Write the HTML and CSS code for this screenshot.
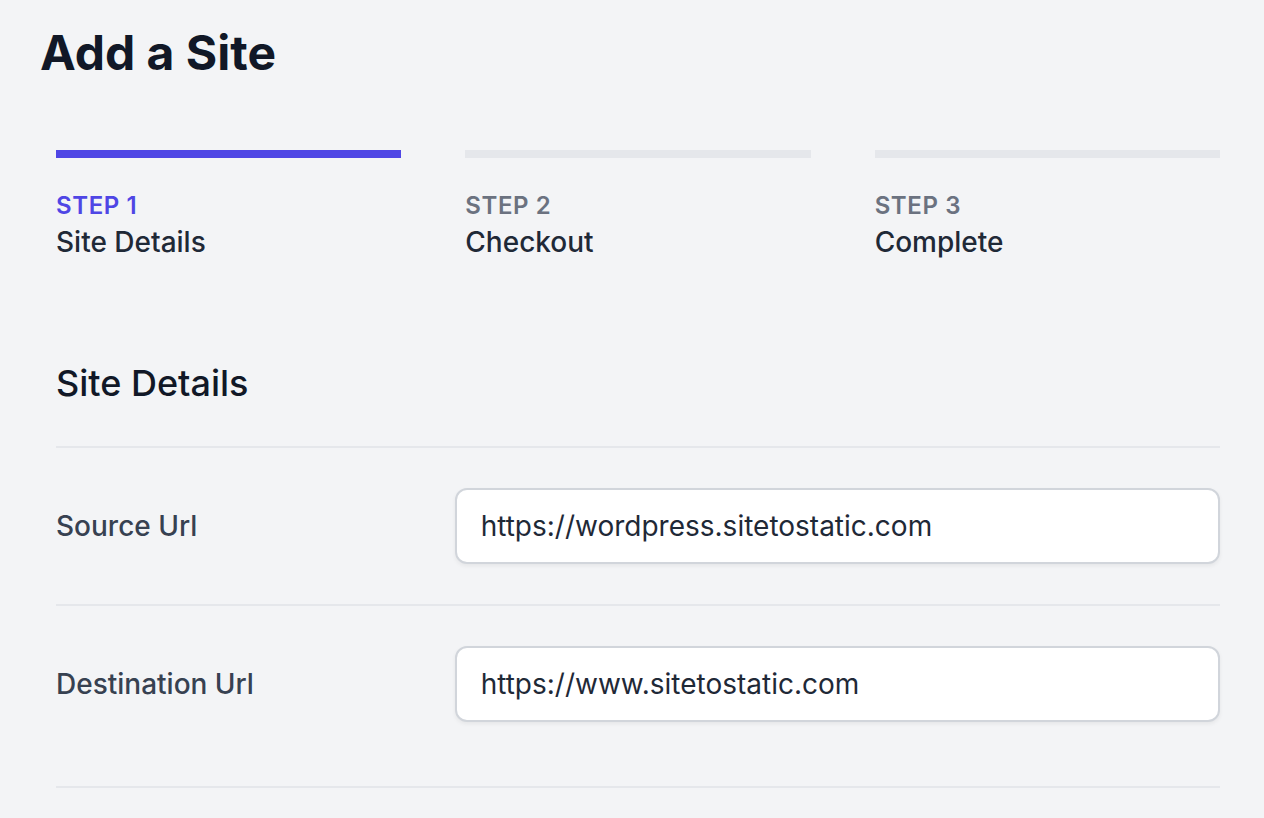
FILE: index.html
```html
<!DOCTYPE html>
<html lang="en">
<head>
<meta charset="utf-8">
<title>Add a Site</title>
<link rel="stylesheet" href="styles.css">
</head>
<body>
  <header class="header">
    <h1 class="title">Add a Site</h1>
  </header>
  <main class="main">
    <nav class="steps">
      <div class="step step-active">
        <span class="step-num">Step 1</span>
        <span class="step-name">Site Details</span>
      </div>
      <div class="step">
        <span class="step-num">Step 2</span>
        <span class="step-name">Checkout</span>
      </div>
      <div class="step">
        <span class="step-num">Step 3</span>
        <span class="step-name">Complete</span>
      </div>
    </nav>

    <section class="details">
      <h3 class="section-title">Site Details</h3>
      <div class="row">
        <label class="label" for="src">Source Url</label>
        <input class="input" id="src" type="text" value="https://wordpress.sitetostatic.com">
      </div>
      <div class="row row-last">
        <label class="label" for="dst">Destination Url</label>
        <input class="input" id="dst" type="text" value="https://www.sitetostatic.com">
      </div>
      <div class="row-end"></div>
    </section>
  </main>
</body>
</html>
```
FILE: styles.css
```css
* { box-sizing: border-box; }
html, body {
  margin: 0;
  padding: 0;
  background: #f3f4f6;
  font-family: Inter, "Liberation Sans", sans-serif;
  color: #111827;
}
.header {
  padding: 21px 40px 0;
}
.title {
  margin: 0;
  font-size: 48px;
  line-height: 64px;
  font-weight: 700;
  color: #111827;
}
.main {
  padding: 0 44px 0 56px;
}
.steps {
  display: flex;
  gap: 64px;
  margin-top: 65px;
}
.step {
  flex: 1;
  display: flex;
  flex-direction: column;
  border-top: 8px solid #e5e7eb;
  padding-top: 32px;
}
.step-active {
  border-top-color: #4f46e5;
}
.step-num {
  font-size: 24px;
  line-height: 32px;
  font-weight: 600;
  letter-spacing: 0.025em;
  text-transform: uppercase;
  color: #6b7280;
}
.step-active .step-num {
  color: #4f46e5;
}
.step-name {
  font-size: 28px;
  line-height: 40px;
  font-weight: 500;
  color: #1f2937;
}
.details {
  margin-top: 93px;
}
.section-title {
  margin: 0 0 35px;
  font-size: 36px;
  line-height: 56px;
  font-weight: 500;
  color: #111827;
}
.row {
  display: grid;
  grid-template-columns: repeat(3, 1fr);
  gap: 32px;
  align-items: center;
  border-top: 2px solid #e5e7eb;
  padding: 40px 0;
}
.row-last {
  padding-bottom: 64px;
}
.row-end {
  border-top: 2px solid #e5e7eb;
}
.label {
  font-size: 28px;
  line-height: 40px;
  font-weight: 500;
  color: #374151;
}
.input {
  grid-column: span 2;
  width: 100%;
  border: 2px solid #d1d5db;
  border-radius: 12px;
  background: #fff;
  box-shadow: 0 2px 4px rgba(0, 0, 0, 0.06);
  padding: 16px 24px;
  font-family: Inter, "Liberation Sans", sans-serif;
  font-size: 28px;
  line-height: 40px;
  color: #1f2937;
  outline: none;
}
```
